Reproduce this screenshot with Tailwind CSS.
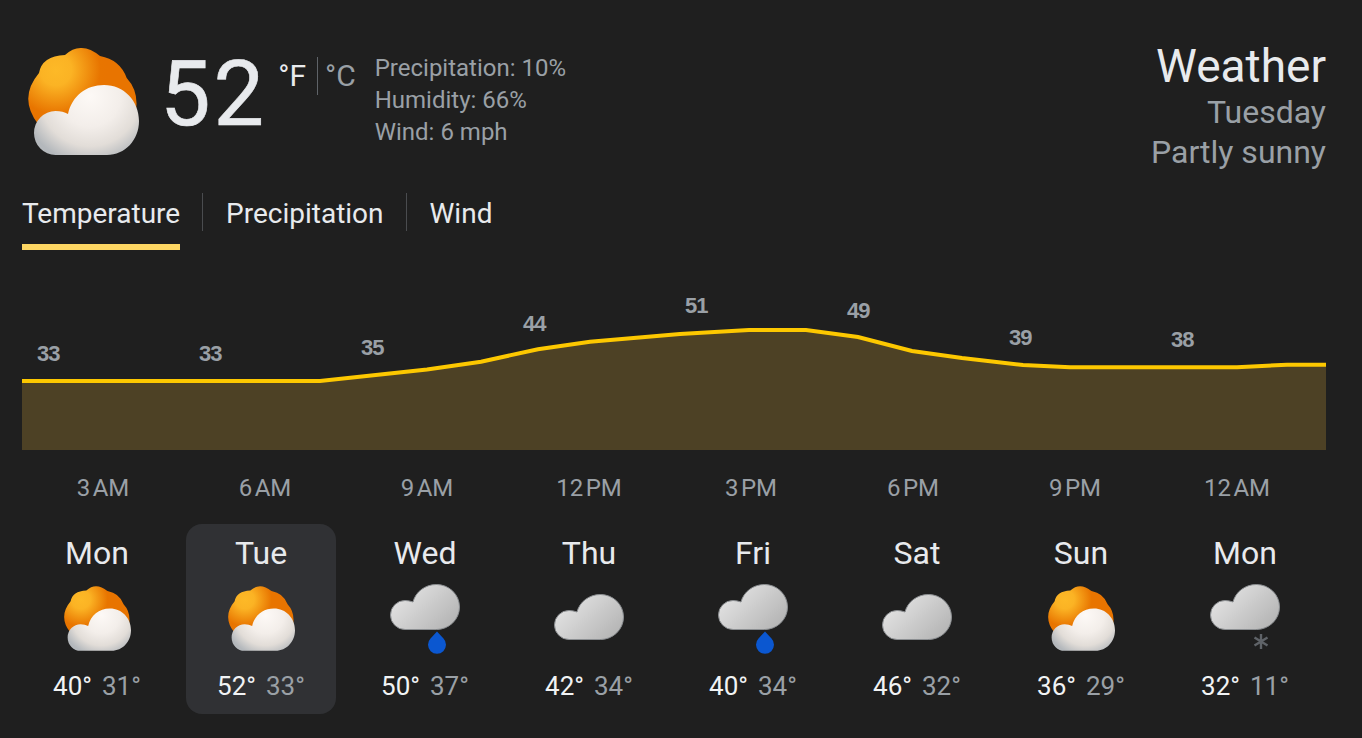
<!DOCTYPE html>
<html lang="en">
<head>
  <meta charset="UTF-8" />
  <title>Weather</title>
  <script src="https://cdn.jsdelivr.net/npm/@tailwindcss/browser@4"></script>
</head>
<body class="bg-[#1f1f1f] font-['Roboto',sans-serif] w-[1362px] h-[738px] overflow-hidden">
  <svg width="0" height="0" class="absolute">
    <defs>
      <radialGradient id="sunFill" gradientUnits="userSpaceOnUse" cx="28" cy="22" r="52">
        <stop offset="0" stop-color="#fdb927" />
        <stop offset="0.3" stop-color="#fbb324" />
        <stop offset="0.85" stop-color="#e87500" />
        <stop offset="1" stop-color="#e87400" />
      </radialGradient>
      <radialGradient id="cloudFill" gradientUnits="userSpaceOnUse" cx="62" cy="48" r="68">
        <stop offset="0" stop-color="#fdf9f6" />
        <stop offset="0.45" stop-color="#f3eeea" />
        <stop offset="0.74" stop-color="#e2ddd8" />
        <stop offset="1" stop-color="#b4b8bc" />
      </radialGradient>
      <linearGradient id="grayFill" x1="0.05" y1="0.25" x2="0.95" y2="0.85">
        <stop offset="0" stop-color="#e4e4e4" />
        <stop offset="1" stop-color="#b4b4b4" />
      </linearGradient>
      <symbol id="sunCloud" viewBox="0 0 111 107">
        <path fill="url(#sunFill)" d="M37 7Q53 -7.5 72 8Q92 11.6 98.7 30Q113.6 46 106 72L10 76Q-10 50 11 25Q14 8 37 7Z" />
        <path fill="url(#cloudFill)" d="M27.5 107A21.5 22 0 0 1 27.5 63Q35 63 40 66C44 48 58 37 76 37C96 37 111 53 111 73C111 92 97 107 79 107Z" />
      </symbol>
      <symbol id="grayCloud" viewBox="0 0 70 46">
        <path fill="url(#grayFill)" stroke="#8b8e91" stroke-width="1" d="M15 45.5A14.5 14.5 0 0 1 15 16.5Q19 16.5 23 18C25.5 8 35 0.5 46.5 0.5C59 0.5 69.5 10.5 69.5 23C69.5 35.5 59 45.5 46.5 45.5Z" />
      </symbol>
    </defs>
  </svg>

  <div class="pl-[22px] pr-[36px]">
    <header class="flex items-start justify-between h-[144px] pt-[48px] box-content">
      <div class="flex items-start">
        <svg class="ml-[6px] w-[111px] h-[107px] shrink-0"><use href="#sunCloud" /></svg>
        <div class="ml-[21px] mt-[-6px] text-[90px] leading-[106px] tracking-[3px] text-[#e8eaed] [-webkit-text-stroke:0.6px_#e8eaed]">52</div>
        <div class="ml-[11px] mt-[9px] flex items-center text-[30px] leading-[38px]">
          <span class="text-[#e8eaed]">°F</span>
          <span class="ml-[11px] mr-[7px] w-px h-[38px] bg-[#5f6368]"></span>
          <span class="text-[#9aa0a6]">°C</span>
        </div>
        <div class="ml-[19px] mt-[4px] text-[24px] leading-[32px] text-[#9aa0a6]">
          <div>Precipitation: 10%</div>
          <div>Humidity: 66%</div>
          <div>Wind: 6 mph</div>
        </div>
      </div>
      <div class="text-right text-[32px] leading-[40px] text-[#9aa0a6] mt-[-6px]">
        <div class="text-[46px] leading-[48px] text-[#e8eaed] mb-[2px]">Weather</div>
        <div>Tuesday</div>
        <div>Partly sunny</div>
      </div>
    </header>

    <nav class="flex items-start h-[58px] text-[28px] leading-[38px] text-[#e8eaed]">
      <div class="mt-[3px] w-[158px] h-[55px] border-b-[6px] border-[#fdd663]">Temperature</div>
      <span class="mt-[1px] ml-[22px] w-px h-[38px] bg-[#4a4c4f]"></span>
      <div class="mt-[3px] ml-[23px]">Precipitation</div>
      <span class="mt-[1px] ml-[22px] w-px h-[38px] bg-[#4a4c4f]"></span>
      <div class="mt-[3px] ml-[23px]">Wind</div>
    </nav>

    <div id="chart" class="relative h-[200px]">
      <svg class="block w-[1304px] h-[200px]" viewBox="0 0 1304 200">
        <path fill="#4d4125" d="M0 131L298 131L405 119.5L459 111.7L516 99.3L568 91.7L658 84L727 80L784 80L836 87L890 101L940 108L1001 115L1048 117.3L1215 117.3L1265 114.7L1304 114.7L1304 200L0 200Z" />
        <path fill="none" stroke="#fdc800" stroke-width="4" d="M0 131L298 131L405 119.5L459 111.7L516 99.3L568 91.7L658 84L727 80L784 80L836 87L890 101L940 108L1001 115L1048 117.3L1215 117.3L1265 114.7L1304 114.7" />
      </svg>
    </div>

    <div id="hours" class="grid grid-cols-[repeat(8,162px)] mt-[22px] text-[24px] leading-[32px] text-[#9aa0a6] text-center"></div>

    <div id="days" class="grid grid-cols-[repeat(8,150px)] gap-x-[14px] mt-[20px]"></div>
  </div>

  <script>
    // values above the line: text + vertical centre inside the chart
    const points = [['33', 104], ['33', 104], ['35', 98], ['44', 74], ['51', 56], ['49', 61], ['39', 88], ['38', 90]];
    document.getElementById('chart').insertAdjacentHTML('beforeend', points.map((p, i) => `
      <span class="absolute font-['Liberation_Sans',sans-serif] font-bold text-[22px] leading-[16px] tracking-[-1px] text-[#9aa0a6]" style="left:${15 + 162 * i}px;top:${p[1] - 8}px">${p[0]}</span>
    `).join(''));

    const hours = ['3 AM', '6 AM', '9 AM', '12 PM', '3 PM', '6 PM', '9 PM', '12 AM'];
    document.getElementById('hours').innerHTML = hours.map(h => `<div>${h.replace(' ', '\u200a')}</div>`).join('');

    const icons = {
      sun: `<svg class="mt-[2px] w-[67px] h-[65px]"><use href="#sunCloud" /></svg>`,
      cloud: `<svg class="mt-[10px] w-[70px] h-[46px]"><use href="#grayCloud" /></svg>`,
      rain: `<svg class="w-[70px] h-[70px]" viewBox="0 0 70 70"><use href="#grayCloud" width="70" height="46" /><path fill="#0b57d0" d="M47 47.5L53.5 54.5A9 9 0 1 1 40.5 54.5Z" /></svg>`,
      snow: `<svg class="w-[70px] h-[70px]" viewBox="0 0 70 70"><use href="#grayCloud" width="70" height="46" /><path stroke="#5f6368" stroke-width="2.4" fill="none" d="M51 50V65M44.5 53.5L57.5 61.5M57.5 53.5L44.5 61.5" /></svg>`,
    };
    const days = [
      ['Mon', 'sun', 40, 31], ['Tue', 'sun', 52, 33], ['Wed', 'rain', 50, 37], ['Thu', 'cloud', 42, 34],
      ['Fri', 'rain', 40, 34], ['Sat', 'cloud', 46, 32], ['Sun', 'sun', 36, 29], ['Mon', 'snow', 32, 11],
    ];
    document.getElementById('days').innerHTML = days.map((d, i) => `
      <div class="h-[190px] rounded-[16px] flex flex-col items-center pt-[12px] ${i === 1 ? 'bg-[#303134]' : ''}">
        <div class="text-[32px] leading-[34px] text-[#e8eaed]">${d[0]}</div>
        <div class="h-[72px] mt-[14px] flex justify-center items-start">${icons[d[1]]}</div>
        <div class="mt-[14px] text-[26px] leading-[32px] flex gap-[10px]">
          <span class="text-[#f1f3f4]">${d[2]}°</span><span class="text-[#9aa0a6]">${d[3]}°</span>
        </div>
      </div>
    `).join('');
  </script>
</body>
</html>
